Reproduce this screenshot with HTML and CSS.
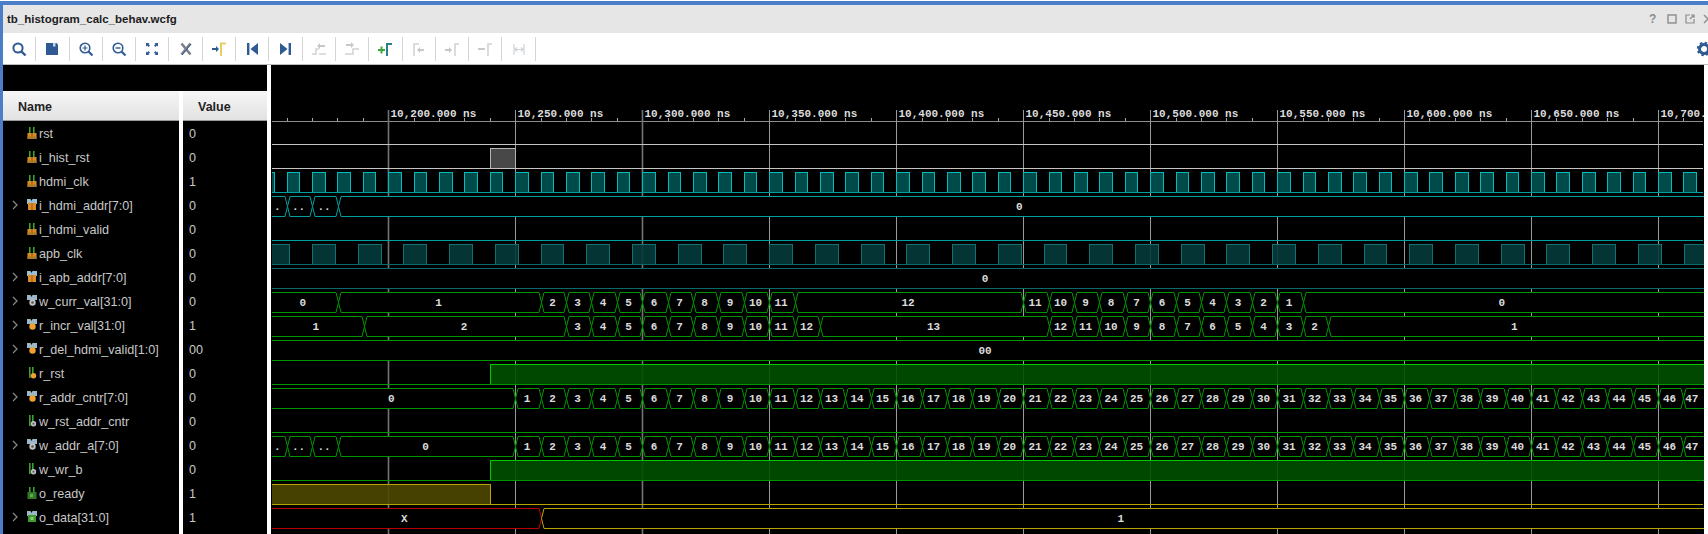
FILE: index.html
```html
<!DOCTYPE html>
<html lang="en">
<head>
    <meta charset="UTF-8">
    <title>tb_histogram_calc_behav.wcfg</title>
    <link rel="stylesheet" href="styles.css">
</head>
<body>
    <svg class="defs" width="0" height="0">
        <symbol id="chev" viewBox="0 0 8 10"><path d="M2 1l4 4-4 4" fill="none" stroke="#8a8a8a" stroke-width="1.2"/></symbol>
        <!-- signal icons: scalar / bus crossed with input, reg, wire, output -->
        <symbol id="in-bit" viewBox="0 0 10 12"><path d="M2 0h1.600v7H2zM6 0h1.600v7H6z" fill="#3fa02c"/><path d="M0.500 6h9v6h-9z" fill="#d98a26"/><path d="M4.500 6h1v6h-1z" fill="#7a5a20"/><path d="M0.500 9.500h9V12h-9z" fill="#a87828"/></symbol>
        <symbol id="in-bus" viewBox="0 0 10 12"><path d="M0 0h3.500l1 2 1-2H10v5H0z" fill="#9cc0d0"/><path d="M1 4h8v7H1z" fill="#e08a24"/><path d="M4.500 4h1v7h-1z" fill="#8a6228"/></symbol>
        <symbol id="reg-bit" viewBox="0 0 10 12"><path d="M2 0h1.600v11H2zM5 0h1.600v7H5z" fill="#3fa02c"/><circle cx="6.500" cy="8.800" r="2.700" fill="#f0a030"/></symbol>
        <symbol id="reg-bus" viewBox="0 0 10 12"><path d="M0 0h3.500l1 2 1-2H10v5H7l-1 3H4L3 5H0z" fill="#9cb8c8"/><circle cx="5.500" cy="7.500" r="3.200" fill="#f0a030"/></symbol>
        <symbol id="wire-bit" viewBox="0 0 10 12"><path d="M2 0h1.600v11H2zM5 0h1.600v7H5z" fill="#3fa02c"/><circle cx="6.500" cy="8.800" r="2.700" fill="#c0c0c0"/><circle cx="6.500" cy="8.800" r="1" fill="#555"/></symbol>
        <symbol id="wire-bus" viewBox="0 0 10 12"><path d="M0 0h3.500l1 2 1-2H10v5H7l-1 3H4L3 5H0z" fill="#9cb8c8"/><circle cx="5.500" cy="7.500" r="3.200" fill="#c0c0c0"/><circle cx="5.500" cy="7.500" r="1.200" fill="#555"/></symbol>
        <symbol id="out-bit" viewBox="0 0 10 12"><path d="M2 0h1.600v6H2zM6 0h1.600v6H6z" fill="#3fa02c"/><path d="M0.500 5h9v7h-9z" fill="#2f7a22"/><path d="M3 7h3v3H3z" fill="#68a858"/></symbol>
        <symbol id="out-bus" viewBox="0 0 10 12"><path d="M0 0h3.500l1 2 1-2H10v5H0z" fill="#9cb8c8"/><path d="M1 4h8v7H1z" fill="#3f9a30"/><path d="M3.500 6h3v3h-3z" fill="#8ad07a"/></symbol>
    </svg>

    <div class="window">
        <div class="titlebar">
            <span class="title">tb_histogram_calc_behav.wcfg</span>
            <div class="title-tools">
                <span class="help">?</span>
                <svg class="title-icon" viewBox="0 0 10 10"><rect x="1" y="1" width="8" height="8" fill="none" stroke="#8c8c8c" stroke-width="1.4"/></svg>
                <svg class="title-icon" viewBox="0 0 10 10"><path d="M5 1H1v8h8V5M6 1h3v3M9 1L5 5" fill="none" stroke="#8c8c8c" stroke-width="1.2"/></svg>
                <svg class="title-icon" viewBox="0 0 10 10"><path d="M1 1l8 8M9 1l-8 8" fill="none" stroke="#8c8c8c" stroke-width="1.4"/></svg>
            </div>
        </div>

        <div class="toolbar">
            <button class="tool"><svg viewBox="0 0 16 16"><circle cx="7" cy="7" r="4.600" fill="none" stroke="#2f5a94" stroke-width="2"/><path d="M10.500 10.500l4 4" stroke="#2f5a94" stroke-width="2.400"/></svg></button>
            <button class="tool"><svg viewBox="0 0 16 16"><path d="M2 2h10.500L14 3.500V14H2z" fill="#2f5a94"/><path d="M9 2h2.500v3.500H9z" fill="#c8d4e4"/></svg></button>
            <button class="tool"><svg viewBox="0 0 16 16"><circle cx="7" cy="7" r="4.800" fill="none" stroke="#2f5a94" stroke-width="1.600"/><path d="M10.500 10.500l4 4" stroke="#2f5a94" stroke-width="2.200"/><path d="M4.500 7h5M7 4.500v5" stroke="#2f5a94" stroke-width="1.200"/></svg></button>
            <button class="tool"><svg viewBox="0 0 16 16"><circle cx="7" cy="7" r="4.800" fill="none" stroke="#2f5a94" stroke-width="1.600"/><path d="M10.500 10.500l4 4" stroke="#2f5a94" stroke-width="2.200"/><path d="M4.500 7h5" stroke="#2f5a94" stroke-width="1.400"/></svg></button>
            <button class="tool"><svg viewBox="0 0 16 16"><path d="M2 2h3.500L4.500 3 6 4.500 4.500 6 3 4.500 2 5.500zM14 2v3.500l-1-1L11.500 6 10 4.500 11.500 3l-1-1zM2 14v-3.500l1 1L4.500 10 6 11.500 4.500 13l1 1zM14 14h-3.500l1-1L10 11.500 11.500 10 13 11.500l1-1z" fill="#2f5a94"/></svg></button>
            <button class="tool"><svg viewBox="0 0 16 16"><path d="M3.500 2.500l9 11M12.500 2.500l-9 11" stroke="#7c8088" stroke-width="2.600"/><path d="M4 14L13 3" stroke="#2f5a94" stroke-width="1"/></svg></button>
            <button class="tool"><svg viewBox="0 0 16 16"><path d="M1 7h4V5l3 3-3 3V9H1z" fill="#2f5a94"/><path d="M10 15V2.500h5" fill="none" stroke="#e6cf6a" stroke-width="2"/></svg></button>
            <button class="tool"><svg viewBox="0 0 16 16"><path d="M3 2h2.400v12H3zM14 2v12L6.500 8z" fill="#2f5a94"/></svg></button>
            <button class="tool"><svg viewBox="0 0 16 16"><path d="M2 2v12l7.500-6zM10.600 2H13v12h-2.400z" fill="#2f5a94"/></svg></button>
            <button class="tool"><svg viewBox="0 0 16 16"><path d="M1 13h4V8h3M8 13h7" fill="none" stroke="#d0d4d8" stroke-width="1.500"/><path d="M6 5l3-3v2h5v2H9v2z" fill="#c4c8cc"/></svg></button>
            <button class="tool"><svg viewBox="0 0 16 16"><path d="M1 13h8V8h6" fill="none" stroke="#d0d4d8" stroke-width="1.500"/><path d="M2 3h5V1l3 3-3 3V5H2z" fill="#c4c8cc"/></svg></button>
            <button class="tool"><svg viewBox="0 0 16 16"><path d="M1 9h7M4.500 5.500v7" stroke="#3aa83a" stroke-width="2"/><path d="M10 15V3h5" fill="none" stroke="#2a7f8c" stroke-width="2"/></svg></button>
            <button class="tool"><svg viewBox="0 0 16 16"><path d="M3 15V3h5" fill="none" stroke="#d0d4d8" stroke-width="1.600"/><path d="M6 9l3-3v2h4v2H9v2z" fill="#c4c8cc"/></svg></button>
            <button class="tool"><svg viewBox="0 0 16 16"><path d="M1 8h4V6l3 3-3 3v-2H1z" fill="#c4c8cc"/><path d="M11 15V3h4" fill="none" stroke="#d0d4d8" stroke-width="1.600"/></svg></button>
            <button class="tool"><svg viewBox="0 0 16 16"><path d="M1 8h7" stroke="#b8bcc0" stroke-width="1.600"/><path d="M11 15V3h4" fill="none" stroke="#d0d4d8" stroke-width="1.600"/></svg></button>
            <button class="tool"><svg viewBox="0 0 16 16"><path d="M3 3v11M13 3v11M4 8.500h8M6 6.500l-2 2 2 2M10 6.500l2 2-2 2" fill="none" stroke="#d0d4d8" stroke-width="1.200"/></svg></button>
            <button class="tool gear"><svg viewBox="0 0 16 16"><circle cx="8" cy="8" r="4.500" fill="none" stroke="#2f5a94" stroke-width="3"/><circle cx="8" cy="8" r="6" fill="none" stroke="#2f5a94" stroke-width="2.400" stroke-dasharray="2.400 2.300"/></svg></button>
        </div>

        <div class="viewer">
            <div class="signals">
                <div class="spacer"></div>
                <div class="table">
                    <div class="col-name">
                        <div class="head">Name</div>
                        <ul class="rows">
                            <li class="row"><svg class="icon"><use href="#in-bit"/></svg>rst</li>
                            <li class="row"><svg class="icon"><use href="#in-bit"/></svg>i_hist_rst</li>
                            <li class="row"><svg class="icon"><use href="#in-bit"/></svg>hdmi_clk</li>
                            <li class="row"><svg class="chev"><use href="#chev"/></svg><svg class="icon"><use href="#in-bus"/></svg>i_hdmi_addr[7:0]</li>
                            <li class="row"><svg class="icon"><use href="#in-bit"/></svg>i_hdmi_valid</li>
                            <li class="row"><svg class="icon"><use href="#in-bit"/></svg>apb_clk</li>
                            <li class="row"><svg class="chev"><use href="#chev"/></svg><svg class="icon"><use href="#in-bus"/></svg>i_apb_addr[7:0]</li>
                            <li class="row"><svg class="chev"><use href="#chev"/></svg><svg class="icon"><use href="#wire-bus"/></svg>w_curr_val[31:0]</li>
                            <li class="row"><svg class="chev"><use href="#chev"/></svg><svg class="icon"><use href="#reg-bus"/></svg>r_incr_val[31:0]</li>
                            <li class="row"><svg class="chev"><use href="#chev"/></svg><svg class="icon"><use href="#reg-bus"/></svg>r_del_hdmi_valid[1:0]</li>
                            <li class="row"><svg class="icon"><use href="#reg-bit"/></svg>r_rst</li>
                            <li class="row"><svg class="chev"><use href="#chev"/></svg><svg class="icon"><use href="#reg-bus"/></svg>r_addr_cntr[7:0]</li>
                            <li class="row"><svg class="icon"><use href="#wire-bit"/></svg>w_rst_addr_cntr</li>
                            <li class="row"><svg class="chev"><use href="#chev"/></svg><svg class="icon"><use href="#wire-bus"/></svg>w_addr_a[7:0]</li>
                            <li class="row"><svg class="icon"><use href="#wire-bit"/></svg>w_wr_b</li>
                            <li class="row"><svg class="icon"><use href="#out-bit"/></svg>o_ready</li>
                            <li class="row"><svg class="chev"><use href="#chev"/></svg><svg class="icon"><use href="#out-bus"/></svg>o_data[31:0]</li>
                        </ul>
                    </div>
                    <div class="col-value">
                        <div class="head">Value</div>
                        <ul class="rows values">
                            <li class="row">0</li>
                            <li class="row">0</li>
                            <li class="row">1</li>
                            <li class="row">0</li>
                            <li class="row">0</li>
                            <li class="row">0</li>
                            <li class="row">0</li>
                            <li class="row">0</li>
                            <li class="row">1</li>
                            <li class="row">00</li>
                            <li class="row">0</li>
                            <li class="row">0</li>
                            <li class="row">0</li>
                            <li class="row">0</li>
                            <li class="row">0</li>
                            <li class="row">1</li>
                            <li class="row">1</li>
                        </ul>
                    </div>
                </div>
            </div>
            <div id="waves" class="waves"></div>
        </div>
    </div>
    <script src="wave.js"></script>
</body>
</html>
```

FILE: styles.css
```css
* {
    box-sizing: border-box;
}

html, body {
    margin: 0;
    padding: 0;
    height: 534px;
    overflow: hidden;
    background-color: #fff;
}

body {
    padding-top: 1px;
    font-family: "Liberation Sans", Arial, sans-serif;
}

.defs {
    display: block;
    height: 0;
}

.window {
    height: 533px;
    border-top: 4px solid #4a7fc8;
    border-left: 3px solid #4a7fc8;
    display: flex;
    flex-direction: column;
}

.titlebar {
    height: 28px;
    flex: none;
    background-color: #e6e6e6;
    display: flex;
    align-items: center;
    justify-content: space-between;
    padding-left: 4px;
}

.title {
    font-size: 11.5px;
    font-weight: bold;
    color: #1c1c1c;
}

.title-tools {
    display: flex;
    align-items: center;
    gap: 8px;
    margin-right: -5px;
}

.help {
    font-size: 12px;
    font-weight: bold;
    color: #8c8c8c;
    width: 10px;
}

.title-icon {
    width: 10px;
    height: 10px;
}

.toolbar {
    height: 32px;
    flex: none;
    background-color: #fff;
    border-bottom: 1px solid #bdbdbd;
    display: flex;
    align-items: center;
}

.tool {
    width: 33.3px;
    height: 24px;
    flex: none;
    padding: 0;
    background: none;
    border: none;
    border-right: 1px solid #d4d4d4;
    display: flex;
    align-items: center;
    justify-content: center;
}

.tool svg {
    width: 16px;
    height: 16px;
}

.tool.gear {
    margin-left: auto;
    margin-right: -13px;
    border-right: none;
}

.viewer {
    flex: 1;
    min-height: 0;
    display: flex;
    background-color: #fff;
}

.signals {
    width: 264px;
    flex: none;
    background-color: #000;
    display: flex;
    flex-direction: column;
}

.spacer {
    height: 26px;
    flex: none;
}

.table {
    flex: 1;
    min-height: 0;
    display: flex;
    gap: 4px;
    background-color: #fff;
}

.col-name {
    width: 176px;
    flex: none;
    background-color: #000;
}

.col-value {
    flex: 1;
    background-color: #000;
}

.head {
    height: 30px;
    background: linear-gradient(#f6f6f6, #e2e2e2);
    border-bottom: 1px solid #9a9a9a;
    display: flex;
    align-items: center;
    padding: 2px 0 0 15px;
    font-size: 12.5px;
    font-weight: bold;
    color: #222;
}

.rows {
    list-style: none;
    margin: 0;
    padding: 0.5px 0 0;
}

.row {
    height: 24px;
    display: flex;
    align-items: center;
    position: relative;
    padding-left: 36px;
    font-size: 12.6px;
    color: #c8c8c8;
    white-space: nowrap;
}

.values .row {
    padding-left: 6px;
    font-size: 12.5px;
}

.icon {
    position: absolute;
    left: 24px;
    top: 5px;
    width: 10px;
    height: 12px;
}

.chev {
    position: absolute;
    left: 8px;
    top: 6px;
    width: 8px;
    height: 10px;
}

.waves {
    margin-left: 4px;
    width: 1433px;
    flex: none;
    background-color: #000;
}

.waves svg {
    display: block;
}

.waves text {
    font-family: "Liberation Mono", "Courier New", monospace;
    font-size: 11px;
    font-weight: bold;
    fill: #dcdcdc;
}

.waves .value {
    text-anchor: middle;
}
```

FILE: wave.js
```js
// draws the waveform pane, coordinates are page pixels (see the viewBox)
const LEFT = 272;
const RIGHT = 1703;
const ROW0 = 124.5;    // top of the first signal
const PITCH = 24;
const HEIGHT = 20;
const PX_PER_NS = 2.54;
const CYCLE = 25.4;

const TEAL = { line: '#00a0a0', high: '#00bcbc', fill: '#005252' };
const TEAL_DIM = { line: '#0a6a6a', high: '#0f7272', fill: '#063a3a' };
const GREEN = { line: '#009600', high: '#00c800', fill: '#004f00' };
const GRAY = { line: '#c4c4c4', high: '#b4b4b4', fill: '#505050' };
const YELLOW = { line: '#b8a400', high: '#b8a400', fill: '#4e4800' };

const out = [];

function timeX(ns) {
    return 388.3 + (ns - 10200) * PX_PER_NS;
}

function snap(x) {
    return Math.floor(x) + 0.5;
}

function edge(k) {
    return snap(388.3 + k * CYCLE + 0.3);
}

function rowTop(i) {
    return ROW0 + i * PITCH;
}

function drawLine(i, color) {
    const y = rowTop(i) + HEIGHT;
    out.push(`<path d="M${LEFT} ${y}H${RIGHT}" stroke="${color.line}"/>`);
}

// highs = [[x1, x2], ...]
function drawPulses(i, color, highs) {
    const top = rowTop(i);
    highs.forEach(h => {
        out.push(`<rect x="${h[0]}" y="${top}" width="${h[1] - h[0]}" height="${HEIGHT}" fill="${color.fill}" fill-opacity="0.9" stroke="${color.high}"/>`);
    });
    drawLine(i, color);
}

// segs = [[x1, x2, label, colors?], ...], ends outside the pane stay open
function drawBus(i, color, segs) {
    const top = rowTop(i);
    const mid = top + HEIGHT / 2;
    const bot = top + HEIGHT;
    segs.forEach(s => {
        const c = s[3] || color;
        const a = s[0] + 2.5;
        const b = s[1] - 2.5;
        out.push(`<path d="M${s[0]} ${mid}L${a} ${top}H${b}L${s[1]} ${mid}L${b} ${bot}H${a}Z" fill="#000" stroke="${c.line}"/>`);
    });
    segs.forEach(s => {
        const x1 = Math.max(s[0], LEFT - 2);
        const x2 = Math.min(s[1], RIGHT);
        out.push(`<text class="value" x="${(x1 + x2) / 2 - 1.5}" y="${mid + 3.5}">${s[2]}</text>`);
    });
}

// bus that holds `first` and steps by `step` on every clock edge from k1 to k2
function counting(k1, k2, first, step) {
    const segs = [];
    for (let k = k1; k < k2; k++) {
        segs.push([edge(k), edge(k + 1), first + (k - k1) * step]);
    }
    return segs;
}

const OPEN_L = 250;
const OPEN_R = 1730;

// ruler and grid
out.push(`<path d="M${LEFT} 121.500H${RIGHT}" stroke="#8c8c8c"/>`);
for (let k = -4; k <= 52; k++) {
    out.push(`<path d="M${edge(k)} 118V121" stroke="#a8a8a8"/>`);
}
for (let ns = 10200; ns <= 10700; ns += 50) {
    const x = snap(timeX(ns));
    const thick = ns === 10200 || ns === 10300;
    out.push(`<path d="M${x} 110V534" stroke="${thick ? '#747474' : '#9a9a9a'}" stroke-width="${thick ? 1.6 : 1}"/>`);
    const label = '10,' + String(ns).slice(2, 5) + '.000 ns';
    out.push(`<text x="${x + 2}" y="117">${label}</text>`);
}

// rst, i_hist_rst
drawLine(0, GRAY);
drawPulses(1, GRAY, [[edge(4), edge(5)]]);

// hdmi_clk
const hdmiHighs = [];
for (let k = -5; k <= 52; k++) {
    hdmiHighs.push([edge(k), snap(388.3 + k * CYCLE + 13)]);
}
drawPulses(2, TEAL, hdmiHighs);

drawBus(3, TEAL, [
    [OPEN_L, edge(-4), '.'],
    [edge(-4), edge(-3), '..'],
    [edge(-3), edge(-2) + 1, '..'],
    [edge(-2) + 1, OPEN_R, '0']
]);

drawLine(4, TEAL);

// apb_clk has its own period, 18 ns
const apbHighs = [];
for (let k = -1; k <= 31; k++) {
    apbHighs.push([snap(312.5 + k * 45.72), snap(312.5 + k * 45.72 + 22.86)]);
}
drawPulses(5, TEAL_DIM, apbHighs);

drawBus(6, TEAL_DIM, [[OPEN_L, OPEN_R, '0']]);

// w_curr_val
drawBus(7, GREEN, [
    [OPEN_L, edge(-2) + 1, '0'],
    [edge(-2) + 1, edge(6), '1'],
    ...counting(6, 16, 2, 1),
    [edge(16), edge(25), '12'],
    ...counting(25, 36, 11, -1),
    [edge(36), OPEN_R, '0']
]);

// r_incr_val
drawBus(8, GREEN, [
    [OPEN_L, edge(-1) + 1, '1'],
    [edge(-1) + 1, edge(7), '2'],
    ...counting(7, 17, 3, 1),
    [edge(17), edge(26), '13'],
    ...counting(26, 37, 12, -1),
    [edge(37), OPEN_R, '1']
]);

drawBus(9, GREEN, [[OPEN_L, OPEN_R, '00']]);

// r_rst
drawPulses(10, GREEN, [[edge(4), OPEN_R]]);

// r_addr_cntr
drawBus(11, GREEN, [
    [OPEN_L, edge(5), '0'],
    ...counting(5, 51, 1, 1),
    [edge(51), OPEN_R, '47']
]);

drawLine(12, GREEN);

// w_addr_a
drawBus(13, GREEN, [
    [OPEN_L, edge(-4), '.'],
    [edge(-4), edge(-3), '..'],
    [edge(-3), edge(-2) + 1, '..'],
    [edge(-2) + 1, edge(5), '0'],
    ...counting(5, 51, 1, 1),
    [edge(51), OPEN_R, '47']
]);

// w_wr_b
drawPulses(14, GREEN, [[edge(4), OPEN_R]]);

// o_ready
drawPulses(15, YELLOW, [[OPEN_L, edge(4)]]);

// o_data, red while undefined
drawBus(16, YELLOW, [
    [OPEN_L, edge(6), 'X', { line: '#b80000' }],
    [edge(6), OPEN_R, '1']
]);

document.getElementById('waves').innerHTML =
    `<svg width="1433" height="469" viewBox="271 65 1433 469" fill="none">
        <svg x="${LEFT}" y="65" width="${RIGHT + 1 - LEFT}" height="469" viewBox="${LEFT} 65 ${RIGHT + 1 - LEFT} 469">${out.join('')}</svg>
    </svg>`;
```
